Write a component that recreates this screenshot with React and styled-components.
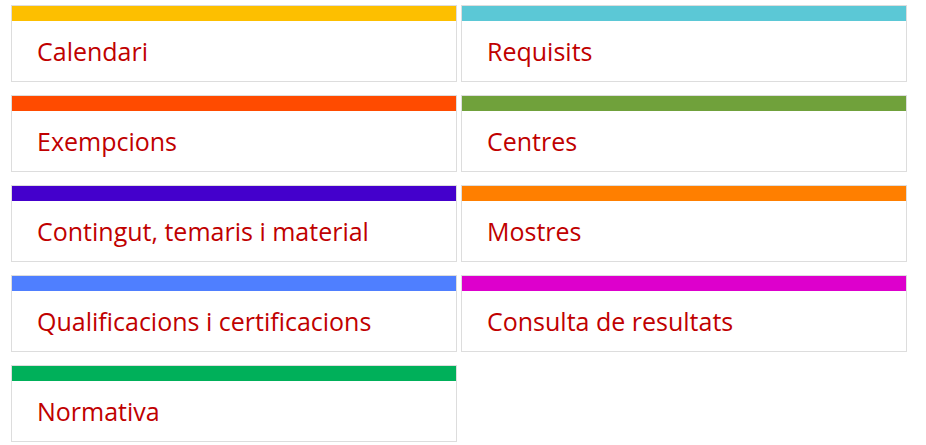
import styled, { createGlobalStyle } from 'styled-components';

const GlobalStyle = createGlobalStyle`
  body {
    margin: 0;
    background: #fff;
    font-family: "Open Sans", "Liberation Sans", sans-serif;
  }
`;

const items = [
  { label: 'Calendari', color: '#fdbf00' },
  { label: 'Requisits', color: '#5bc8d6' },
  { label: 'Exempcions', color: '#ff4b00' },
  { label: 'Centres', color: '#70a13b' },
  { label: 'Contingut, temaris i material', color: '#4400cc' },
  { label: 'Mostres', color: '#ff7f00' },
  { label: 'Qualificacions i certificacions', color: '#4f7fff' },
  { label: 'Consulta de resultats', color: '#dd00cc' },
  { label: 'Normativa', color: '#00b05a' },
];

const Grid = styled.div`
  display: grid;
  grid-template-columns: 446px 446px;
  column-gap: 4px;
  row-gap: 13px;
  padding: 5px 0 0 11px;
`;

const Card = styled.a`
  display: block;
  border: 1px solid #dddddd;
  text-decoration: none;
  background: #fff;
`;

const Bar = styled.div`
  height: 15px;
  background: ${(p) => p.$color};
`;

const Label = styled.div`
  height: 60px;
  display: flex;
  align-items: center;
  padding: 0 25px;
  font-size: 25px;
  color: #c00000;
`;

export default function App() {
  return (
    <>
      <GlobalStyle />
      <Grid>
        {items.map((item) => (
          <Card key={item.label} href="#">
            <Bar $color={item.color} />
            <Label>{item.label}</Label>
          </Card>
        ))}
      </Grid>
    </>
  );
}
